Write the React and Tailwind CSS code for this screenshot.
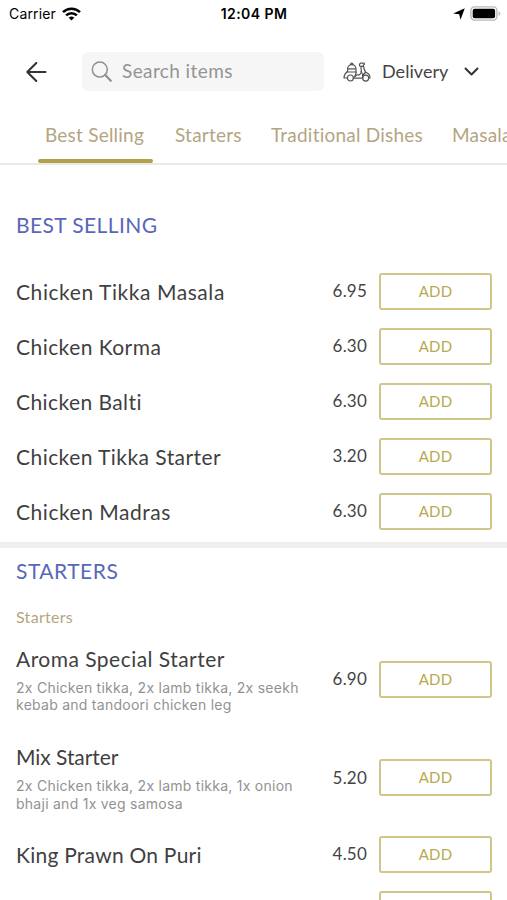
import { useState } from 'react';
import clsx from 'clsx';

const TABS = [
  { name: 'Best Selling', width: 'w-[101px]' },
  { name: 'Starters', width: 'w-[67px]' },
  { name: 'Traditional Dishes', width: 'w-[152px]' },
  { name: 'Masala', width: 'w-[120px]' },
];

const BEST_SELLING = [
  { name: 'Chicken Tikka Masala', price: '6.95', tracking: 'tracking-[0.57px]' },
  { name: 'Chicken Korma', price: '6.30', tracking: 'tracking-[0.45px]' },
  { name: 'Chicken Balti', price: '6.30', tracking: 'tracking-[0.42px]' },
  { name: 'Chicken Tikka Starter', price: '3.20', tracking: 'tracking-[0.45px]' },
  { name: 'Chicken Madras', price: '6.30', tracking: 'tracking-[0.53px]' },
];

const STARTERS = [
  { name: 'Aroma Special Starter', price: '6.90', tracking: 'tracking-[0.47px]', lines: ['2x Chicken tikka, 2x lamb tikka, 2x seekh', 'kebab and tandoori chicken leg'] },
  { name: 'Mix Starter', price: '5.20', tracking: 'tracking-[-0.05px]', lines: ['2x Chicken tikka, 2x lamb tikka, 1x onion', 'bhaji and 1x veg samosa'] },
  { name: 'King Prawn On Puri', price: '4.50', tracking: 'tracking-[0.24px]' },
];

function WifiIcon() {
  return (
    <svg width="19" height="14" viewBox="0 0 19 14" fill="none" stroke="#000" strokeWidth="2.5">
      <path d="M1 5.1a12.2 12.2 0 0 1 17 0" />
      <path d="M4.1 8.4a7.7 7.7 0 0 1 10.8 0" />
      <path d="M9.5 13.6 6.7 10.8a4 4 0 0 1 5.6 0Z" fill="#000" stroke="none" />
    </svg>
  );
}

function ScooterIcon() {
  return (
    <svg width="28" height="20" viewBox="0 0 28 20" fill="none" stroke="#555" strokeWidth="1.2" strokeLinecap="round" strokeLinejoin="round">
      <path d="M4.6 10V6.8a4.2 4.2 0 0 1 8.4 0V10M7.6 2.6c0-2 2.4-2 2.4 0M4.6 6.8H13M3.6 10h9.8" />
      <path d="M4 10c-1.8 1.4-3 3.6-3 6h3.4M13 10.4c.5 2-1.5 2.5-1.2 4.6" />
      <circle cx="7.4" cy="16" r="3" />
      <path d="M10.4 16.2h9.2M11.8 14.4 14 12.8h2.6c1.4-1 1.9-2.6 1.7-4.4l-.4-3.9" />
      <path d="M17.2 4.4c-1-.8-1-2.6.2-3.2h3.4c.8 0 .9 1 .3 1.4l-.8.4.3 1.4ZM20.6 4.4c.2 2.4 1 4.4 2.2 6 2 .6 4.2 2.4 4.2 5.6h-1.3" />
      <path d="M18.2 9.5c1.2 1.6 1.6 3.4 1.5 5.6.4-2.4 1.4-4 3.1-4.7" />
      <circle cx="22.7" cy="16.1" r="3" />
    </svg>
  );
}

function StatusBar() {
  return (
    <div className="grid h-[27px] grid-cols-3 items-center pl-[9px] pr-[6px] font-['Inter','Roboto',sans-serif] text-[14px] text-black">
      <div className="flex items-center gap-[6px]">
        <span className="tracking-[0.15px]">Carrier</span>
        <WifiIcon />
      </div>
      <span className="-ml-[2px] text-center text-[14px] font-semibold tracking-[0.45px]">12:04 PM</span>
      <div className="flex items-center justify-end gap-[5px]">
        <svg width="12" height="12" viewBox="0 0 12 12"><path d="M11.8.2 7.5 11.8 6.2 6.2.2 5.6Z" fill="#000" /></svg>
        <svg width="31" height="15" viewBox="0 0 31 15">
          <rect x=".9" y=".9" width="26" height="13.2" rx="3.5" fill="#fff" stroke="#b8b8b8" strokeWidth="1.4" />
          <rect x="2.7" y="2.7" width="22.4" height="9.6" rx="2" fill="#000" />
          <path d="M28.6 5.2c2.2.6 2.2 4 0 4.6Z" fill="#b8b8b8" />
        </svg>
      </div>
    </div>
  );
}

function Header() {
  return (
    <div className="flex h-[89px] items-center pl-[26px]">
      <svg width="21" height="20" viewBox="0 0 21 20" fill="none" stroke="#333" strokeWidth="2" strokeLinecap="round" strokeLinejoin="round">
        <path d="M19.5 10H1.3M10.3 1 1.3 10l9 9" />
      </svg>
      <div className="ml-[35px] flex h-[39px] w-[242px] items-center rounded-md bg-[#f6f6f6] pl-[9px]">
        <svg width="22" height="22" viewBox="0 0 22 22" fill="none" stroke="#909090" strokeLinecap="round">
          <circle cx="8.8" cy="8.6" r="7.5" strokeWidth="1.5" />
          <path d="m14.2 14 5.6 5.7" strokeWidth="2.2" />
        </svg>
        <span className="ml-[9px] text-[19px] tracking-[0.4px] text-[#949494]">Search items</span>
      </div>
      <button className="ml-[19px] flex items-center text-[18px] text-[#444]">
        <ScooterIcon />
        <span className="ml-[11px] tracking-[0.05px]">Delivery</span>
        <svg className="ml-[16px]" width="15" height="10" viewBox="0 0 15 10" fill="none" stroke="#333" strokeWidth="2" strokeLinecap="round" strokeLinejoin="round">
          <path d="m1.5 1.5 6 6 6-6" />
        </svg>
      </button>
    </div>
  );
}

function AddButton() {
  return (
    <button className="h-[37px] w-[113px] rounded-[3px] border-2 border-[#d0c689] pb-px text-[15px] tracking-[0.2px] text-[#b7a94f]">ADD</button>
  );
}

function MenuItem({ item }) {
  return (
    <div className={clsx('flex items-center', item.lines ? 'h-[98.5px]' : 'h-[55px]')}>
      <div className="min-w-0 flex-1">
        <p className={clsx('text-[21px] leading-6 whitespace-nowrap text-[#3f3f3f]', item.tracking)}>{item.name}</p>
        {item.lines && (
          <div className="mt-[8px] -mb-[2px] font-['Inter','Roboto',sans-serif] text-[14px] leading-[17.5px] tracking-[0.26px] whitespace-nowrap text-[#929292]">
            {item.lines.map((line) => <p key={line}>{line}</p>)}
          </div>
        )}
      </div>
      <span className="mr-[12px] pb-px text-[17px] tracking-[0.2px] text-[#444]">{item.price}</span>
      <AddButton />
    </div>
  );
}

export default function App() {
  const [active, setActive] = useState('Best Selling');

  return (
    <div className="h-[900px] w-[507px] overflow-hidden bg-white font-['Lato','Open_Sans',sans-serif]">
      <StatusBar />
      <Header />
      <nav className="flex h-[49px] gap-[15px] overflow-hidden border-b-2 border-[#e9e9e9] pl-[38px] text-[19px] text-[#b3a582]">
        {TABS.map((tab) => (
          <button
            key={tab.name}
            onClick={() => setActive(tab.name)}
            className="flex shrink-0 flex-col justify-between"
          >
            <span className={clsx('mx-[7px] box-content pt-[5px] text-left leading-7 tracking-[0.22px] whitespace-nowrap', tab.width)}>{tab.name}</span>
            <span className={clsx('h-1 w-full rounded-sm', active === tab.name && 'bg-[#b1a248]')} />
          </button>
        ))}
      </nav>

      <section className="pr-[15px] pl-4">
        <h2 className="pt-[45px] text-[21px] leading-[30px] tracking-[0.4px] text-[#5867b8]">BEST SELLING</h2>
        <div className="mt-[24px]">
          {BEST_SELLING.map((item) => <MenuItem key={item.name} item={item} />)}
        </div>
      </section>

      <div className="mt-[3px] h-[6px] bg-[#efefef]" />

      <section className="pr-[15px] pl-4">
        <h2 className="pt-[8px] text-[21px] leading-[30px] tracking-[0.5px] text-[#5867b8]">STARTERS</h2>
        <p className="mt-[19px] text-[16px] leading-6 tracking-[0.3px] text-[#b3a582]">Starters</p>
        <div className="mt-px">
          {STARTERS.map((item) => <MenuItem key={item.name} item={item} />)}
        </div>
        <div className="flex h-[55px] items-center justify-end">
          <AddButton />
        </div>
      </section>
    </div>
  );
}
